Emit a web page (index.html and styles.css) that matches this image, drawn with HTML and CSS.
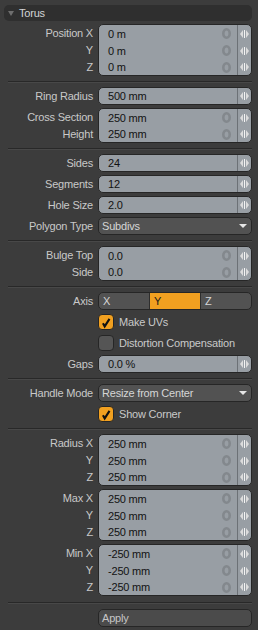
FILE: index.html
```html
<!DOCTYPE html>
<html lang="en">
<head>
    <meta charset="UTF-8">
    <title>Torus</title>
    <link rel="stylesheet" href="styles.css">
</head>
<body>
<div class="panel">
    <div class="head"><span class="tri"></span>Torus</div>

    <!-- position -->
    <div class="grp">
        <div class="lbls"><div>Position X</div><div>Y</div><div>Z</div></div>
        <div class="box">
            <div class="fld"><span class="val">0 m</span><svg class="rst" viewBox="0 0 9 11"><ellipse cx="4.5" cy="5.5" rx="3.2" ry="4.2"/></svg><span class="ctl"><svg class="arr" viewBox="0 0 9 8"><path d="M3 0v8L0 4z M6 0v8l3-4z"/><rect x="4" y="0" width="1" height="8"/></svg></span></div>
            <div class="fld"><span class="val">0 m</span><svg class="rst" viewBox="0 0 9 11"><ellipse cx="4.5" cy="5.5" rx="3.2" ry="4.2"/></svg><span class="ctl"><svg class="arr" viewBox="0 0 9 8"><path d="M3 0v8L0 4z M6 0v8l3-4z"/><rect x="4" y="0" width="1" height="8"/></svg></span></div>
            <div class="fld"><span class="val">0 m</span><svg class="rst" viewBox="0 0 9 11"><ellipse cx="4.5" cy="5.5" rx="3.2" ry="4.2"/></svg><span class="ctl"><svg class="arr" viewBox="0 0 9 8"><path d="M3 0v8L0 4z M6 0v8l3-4z"/><rect x="4" y="0" width="1" height="8"/></svg></span></div>
        </div>
    </div>
    <div class="sep"></div>

    <!-- radius / section -->
    <div class="sec">
        <div class="grp">
            <div class="lbls"><div>Ring Radius</div></div>
            <div class="box">
                <div class="fld"><span class="val">500 mm</span><span class="ctl"><svg class="arr" viewBox="0 0 9 8"><path d="M3 0v8L0 4z M6 0v8l3-4z"/><rect x="4" y="0" width="1" height="8"/></svg></span></div>
            </div>
        </div>
        <div class="grp">
            <div class="lbls"><div>Cross Section</div><div>Height</div></div>
            <div class="box">
                <div class="fld"><span class="val">250 mm</span><svg class="rst" viewBox="0 0 9 11"><ellipse cx="4.5" cy="5.5" rx="3.2" ry="4.2"/></svg><span class="ctl"><svg class="arr" viewBox="0 0 9 8"><path d="M3 0v8L0 4z M6 0v8l3-4z"/><rect x="4" y="0" width="1" height="8"/></svg></span></div>
                <div class="fld"><span class="val">250 mm</span><svg class="rst" viewBox="0 0 9 11"><ellipse cx="4.5" cy="5.5" rx="3.2" ry="4.2"/></svg><span class="ctl"><svg class="arr" viewBox="0 0 9 8"><path d="M3 0v8L0 4z M6 0v8l3-4z"/><rect x="4" y="0" width="1" height="8"/></svg></span></div>
            </div>
        </div>
    </div>
    <div class="sep"></div>

    <!-- topology -->
    <div class="sec">
        <div class="grp">
            <div class="lbls"><div>Sides</div></div>
            <div class="box">
                <div class="fld"><span class="val">24</span><span class="ctl"><svg class="arr" viewBox="0 0 9 8"><path d="M3 0v8L0 4z M6 0v8l3-4z"/><rect x="4" y="0" width="1" height="8"/></svg></span></div>
            </div>
        </div>
        <div class="grp">
            <div class="lbls"><div>Segments</div></div>
            <div class="box">
                <div class="fld"><span class="val">12</span><span class="ctl"><svg class="arr" viewBox="0 0 9 8"><path d="M3 0v8L0 4z M6 0v8l3-4z"/><rect x="4" y="0" width="1" height="8"/></svg></span></div>
            </div>
        </div>
        <div class="grp">
            <div class="lbls"><div>Hole Size</div></div>
            <div class="box">
                <div class="fld"><span class="val">2.0</span><span class="ctl"><svg class="arr" viewBox="0 0 9 8"><path d="M3 0v8L0 4z M6 0v8l3-4z"/><rect x="4" y="0" width="1" height="8"/></svg></span></div>
            </div>
        </div>
        <div class="grp">
            <div class="lbls"><div>Polygon Type</div></div>
            <div class="drop"><span>Subdivs</span><span class="down"></span></div>
        </div>
    </div>
    <div class="sep"></div>

    <!-- bulge -->
    <div class="grp">
        <div class="lbls"><div>Bulge Top</div><div>Side</div></div>
        <div class="box">
            <div class="fld"><span class="val">0.0</span><svg class="rst" viewBox="0 0 9 11"><ellipse cx="4.5" cy="5.5" rx="3.2" ry="4.2"/></svg><span class="ctl"><svg class="arr" viewBox="0 0 9 8"><path d="M3 0v8L0 4z M6 0v8l3-4z"/><rect x="4" y="0" width="1" height="8"/></svg></span></div>
            <div class="fld"><span class="val">0.0</span><svg class="rst" viewBox="0 0 9 11"><ellipse cx="4.5" cy="5.5" rx="3.2" ry="4.2"/></svg><span class="ctl"><svg class="arr" viewBox="0 0 9 8"><path d="M3 0v8L0 4z M6 0v8l3-4z"/><rect x="4" y="0" width="1" height="8"/></svg></span></div>
        </div>
    </div>
    <div class="sep"></div>

    <!-- axis / uvs -->
    <div class="sec">
        <div class="grp">
            <div class="lbls"><div>Axis</div></div>
            <div class="seg"><span>X</span><span class="on">Y</span><span>Z</span></div>
        </div>
        <div class="chk"><span class="cb on"><svg viewBox="0 0 16 16"><path d="M4.5 9.5L6.5 13L12 4.5"/></svg></span>Make UVs</div>
        <div class="chk"><span class="cb"></span>Distortion Compensation</div>
        <div class="grp">
            <div class="lbls"><div>Gaps</div></div>
            <div class="box">
                <div class="fld"><span class="val">0.0 %</span><span class="ctl"><svg class="arr" viewBox="0 0 9 8"><path d="M3 0v8L0 4z M6 0v8l3-4z"/><rect x="4" y="0" width="1" height="8"/></svg></span></div>
            </div>
        </div>
    </div>
    <div class="sep"></div>

    <!-- handle -->
    <div class="sec">
        <div class="grp">
            <div class="lbls"><div>Handle Mode</div></div>
            <div class="drop"><span>Resize from Center</span><span class="down"></span></div>
        </div>
        <div class="chk"><span class="cb on"><svg viewBox="0 0 16 16"><path d="M4.5 9.5L6.5 13L12 4.5"/></svg></span>Show Corner</div>
    </div>
    <div class="sep"></div>

    <!-- size -->
    <div class="sec">
        <div class="grp">
            <div class="lbls"><div>Radius X</div><div>Y</div><div>Z</div></div>
            <div class="box">
                <div class="fld"><span class="val">250 mm</span><svg class="rst" viewBox="0 0 9 11"><ellipse cx="4.5" cy="5.5" rx="3.2" ry="4.2"/></svg><span class="ctl"><svg class="arr" viewBox="0 0 9 8"><path d="M3 0v8L0 4z M6 0v8l3-4z"/><rect x="4" y="0" width="1" height="8"/></svg></span></div>
                <div class="fld"><span class="val">250 mm</span><svg class="rst" viewBox="0 0 9 11"><ellipse cx="4.5" cy="5.5" rx="3.2" ry="4.2"/></svg><span class="ctl"><svg class="arr" viewBox="0 0 9 8"><path d="M3 0v8L0 4z M6 0v8l3-4z"/><rect x="4" y="0" width="1" height="8"/></svg></span></div>
                <div class="fld"><span class="val">250 mm</span><svg class="rst" viewBox="0 0 9 11"><ellipse cx="4.5" cy="5.5" rx="3.2" ry="4.2"/></svg><span class="ctl"><svg class="arr" viewBox="0 0 9 8"><path d="M3 0v8L0 4z M6 0v8l3-4z"/><rect x="4" y="0" width="1" height="8"/></svg></span></div>
            </div>
        </div>
        <div class="grp">
            <div class="lbls"><div>Max X</div><div>Y</div><div>Z</div></div>
            <div class="box">
                <div class="fld"><span class="val">250 mm</span><svg class="rst" viewBox="0 0 9 11"><ellipse cx="4.5" cy="5.5" rx="3.2" ry="4.2"/></svg><span class="ctl"><svg class="arr" viewBox="0 0 9 8"><path d="M3 0v8L0 4z M6 0v8l3-4z"/><rect x="4" y="0" width="1" height="8"/></svg></span></div>
                <div class="fld"><span class="val">250 mm</span><svg class="rst" viewBox="0 0 9 11"><ellipse cx="4.5" cy="5.5" rx="3.2" ry="4.2"/></svg><span class="ctl"><svg class="arr" viewBox="0 0 9 8"><path d="M3 0v8L0 4z M6 0v8l3-4z"/><rect x="4" y="0" width="1" height="8"/></svg></span></div>
                <div class="fld"><span class="val">250 mm</span><svg class="rst" viewBox="0 0 9 11"><ellipse cx="4.5" cy="5.5" rx="3.2" ry="4.2"/></svg><span class="ctl"><svg class="arr" viewBox="0 0 9 8"><path d="M3 0v8L0 4z M6 0v8l3-4z"/><rect x="4" y="0" width="1" height="8"/></svg></span></div>
            </div>
        </div>
        <div class="grp">
            <div class="lbls"><div>Min X</div><div>Y</div><div>Z</div></div>
            <div class="box">
                <div class="fld"><span class="val">-250 mm</span><svg class="rst" viewBox="0 0 9 11"><ellipse cx="4.5" cy="5.5" rx="3.2" ry="4.2"/></svg><span class="ctl"><svg class="arr" viewBox="0 0 9 8"><path d="M3 0v8L0 4z M6 0v8l3-4z"/><rect x="4" y="0" width="1" height="8"/></svg></span></div>
                <div class="fld"><span class="val">-250 mm</span><svg class="rst" viewBox="0 0 9 11"><ellipse cx="4.5" cy="5.5" rx="3.2" ry="4.2"/></svg><span class="ctl"><svg class="arr" viewBox="0 0 9 8"><path d="M3 0v8L0 4z M6 0v8l3-4z"/><rect x="4" y="0" width="1" height="8"/></svg></span></div>
                <div class="fld"><span class="val">-250 mm</span><svg class="rst" viewBox="0 0 9 11"><ellipse cx="4.5" cy="5.5" rx="3.2" ry="4.2"/></svg><span class="ctl"><svg class="arr" viewBox="0 0 9 8"><path d="M3 0v8L0 4z M6 0v8l3-4z"/><rect x="4" y="0" width="1" height="8"/></svg></span></div>
            </div>
        </div>
    </div>
    <div class="sep last"></div>

    <div class="grp">
        <div class="lbls"></div>
        <div class="btn">Apply</div>
    </div>
</div>
</body>
</html>
```

FILE: styles.css
```css
* {
    box-sizing: border-box;
}
body {
    margin: 0;
    background: #3c3c3c;
    font-family: "Liberation Sans", Arial, sans-serif;
    font-size: 11px;
    letter-spacing: -0.2px;
    color: #c9c9c9;
}
.panel {
    width: 258px;
    height: 630px;
    padding: 5px 6px 0 0;
}
.head {
    height: 16px;
    margin: 0 0 3px 4px;
    padding-left: 4px;
    display: flex;
    align-items: center;
    background: #2f2f2f;
    border-radius: 5px;
    color: #d2d4d6;
}
.tri {
    width: 0;
    height: 0;
    margin-right: 5px;
    border-left: 3px solid transparent;
    border-right: 3px solid transparent;
    border-top: 5px solid #6e6e6e;
}
.sec {
    display: flex;
    flex-direction: column;
    gap: 3px;
}
.grp {
    display: flex;
}
.lbls {
    width: 98px;
    flex: none;
    padding: 1px 5px 0 0;
    text-align: right;
}
.lbls div {
    height: 17px;
    line-height: 17px;
}
.box {
    flex: 1;
    background: #989ea4;
    border: 1px solid #262626;
    border-radius: 5px;
    overflow: hidden;
}
.fld {
    height: 17px;
    display: flex;
    align-items: center;
    color: #121212;
}
.fld:last-child {
    height: 16px;
}
.val {
    flex: 1;
    padding-left: 9px;
}
.rst {
    width: 9px;
    height: 11px;
    margin-right: 6px;
    fill: none;
    stroke: #83888d;
    stroke-width: 2.6;
}
.ctl {
    width: 14px;
    align-self: stretch;
    display: flex;
    align-items: center;
    justify-content: center;
    border-left: 1px solid #6c7176;
}
.arr {
    width: 9px;
    height: 8px;
    fill: #dcdcdc;
}
.arr rect {
    fill: #f4f4f4;
}
.drop, .seg, .btn {
    flex: 1;
    height: 18px;
    border: 1px solid #262626;
    border-radius: 5px;
    background: #525252;
    color: #d6d6d6;
}
.drop {
    display: flex;
    align-items: center;
    padding: 0 4px 0 3px;
}
.drop span:first-child {
    flex: 1;
}
.down {
    width: 0;
    height: 0;
    border-left: 4px solid transparent;
    border-right: 4px solid transparent;
    border-top: 4px solid #e6e6e6;
}
.seg {
    display: flex;
    overflow: hidden;
}
.seg span {
    flex: 1;
    padding-left: 4px;
    line-height: 16px;
    border-left: 1px solid #2e2e2e;
}
.seg span:first-child {
    border-left: none;
}
.seg .on {
    background: #f1a020;
    color: #1a1a1a;
}
.chk {
    height: 18px;
    padding-left: 98px;
    display: flex;
    align-items: center;
}
.cb {
    width: 16px;
    height: 16px;
    margin-right: 5px;
    border: 1px solid #262626;
    border-radius: 4px;
    background: #555555;
}
.cb.on {
    background: #f1a020;
}
.cb svg {
    display: block;
    width: 14px;
    height: 14px;
    fill: none;
    stroke: #111;
    stroke-width: 2.4;
}
.btn {
    padding-left: 3px;
    line-height: 16px;
    background: #4b4b4b;
    color: #c6c6c6;
}
.sep {
    height: 2px;
    margin: 5px 0 4px 8px;
    border-top: 1px solid #282828;
    border-bottom: 1px solid #484848;
}
.sep.last {
    margin: 6px 0 5px 8px;
}
```
